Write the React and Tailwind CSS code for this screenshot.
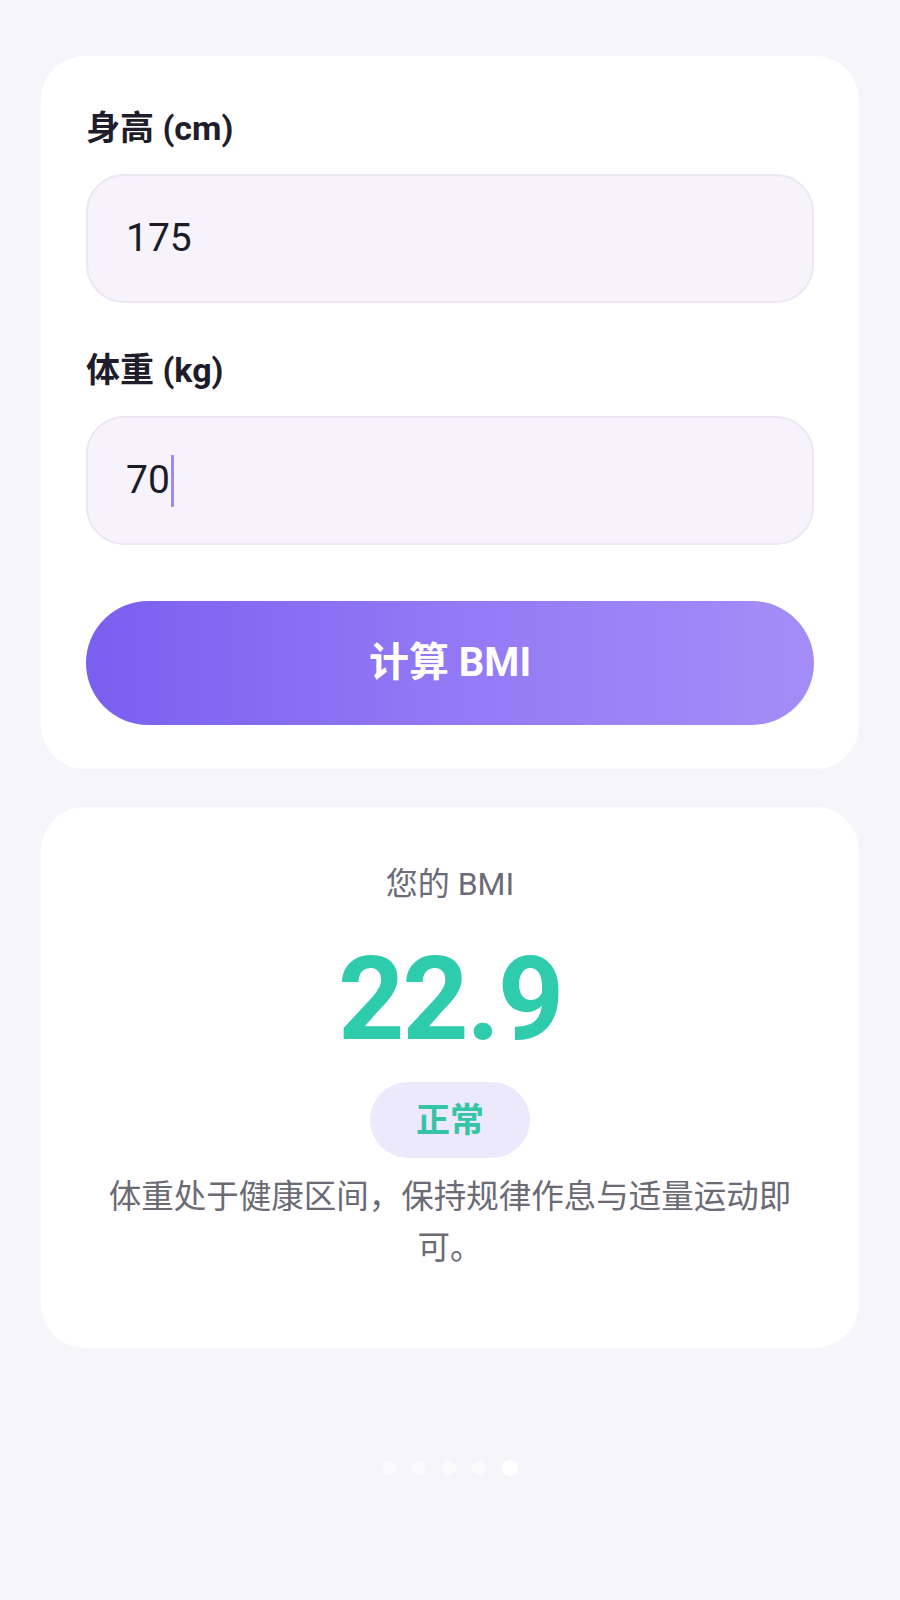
import React from "react";

const font = { fontFamily: 'Roboto, "Noto Sans CJK SC", sans-serif' };

export default function App() {
  return (
    <div
      className="w-[900px] min-h-[1600px] bg-[#f6f5fb] px-[41px] pt-[56px] flex flex-col"
      style={font}
    >
      <div className="bg-white rounded-[44px] px-[45px] pt-[52px] pb-[44px] flex flex-col">
        <label className="text-[34px] font-bold text-[#1f1d2b] leading-[40px]">身高 (cm)</label>
        <div className="mt-[26px] h-[129px] rounded-[38px] bg-[#f6f3fd] border-2 border-[#ebe8f3] flex items-center pl-[38px]">
          <span className="text-[39px] text-[#1d1b26]">175</span>
        </div>
        <label className="mt-[47px] text-[34px] font-bold text-[#1f1d2b] leading-[40px]">体重 (kg)</label>
        <div className="mt-[26px] h-[129px] rounded-[38px] bg-[#f6f3fd] border-2 border-[#ebe8f3] flex items-center pl-[38px]">
          <span className="text-[39px] text-[#1d1b26]">70</span>
          <span className="w-[3px] h-[52px] bg-[#a08bf0] ml-[1px]"></span>
        </div>
        <button className="mt-[56px] h-[124px] rounded-full bg-gradient-to-r from-[#7a5ff0] via-[#9379f5] to-[#a58df8] text-white text-[40px] font-bold">
          计算 BMI
        </button>
      </div>

      <div className="mt-[38px] bg-white rounded-[44px] px-[45px] pt-[57px] pb-[74px] flex flex-col items-center">
        <div className="text-[32px] text-[#6c6b78] leading-[40px]">您的 BMI</div>
        <div className="mt-[35px] text-[116px] font-bold text-[#2ecbac] leading-[120px] tracking-[-0.02em]">22.9</div>
        <div className="mt-[23px] w-[160px] h-[76px] rounded-full bg-[#ede9fd] flex items-center justify-center">
          <span className="text-[34px] font-bold text-[#35c4a6]">正常</span>
        </div>
        <p className="mt-[14px] w-[700px] text-center text-[32.5px] leading-[51px] text-[#6b6a75]">
          体重处于健康区间，保持规律作息与适量运动即可。
        </p>
      </div>

      <div className="mt-[112px] flex items-center justify-center gap-[16px]">
        <span className="w-[14px] h-[14px] rounded-full bg-[#fbfbfe]"></span>
        <span className="w-[14px] h-[14px] rounded-full bg-[#fbfbfe]"></span>
        <span className="w-[14px] h-[14px] rounded-full bg-[#fbfbfe]"></span>
        <span className="w-[14px] h-[14px] rounded-full bg-[#fbfbfe]"></span>
        <span className="w-[16px] h-[16px] rounded-full bg-white"></span>
      </div>
    </div>
  );
}
